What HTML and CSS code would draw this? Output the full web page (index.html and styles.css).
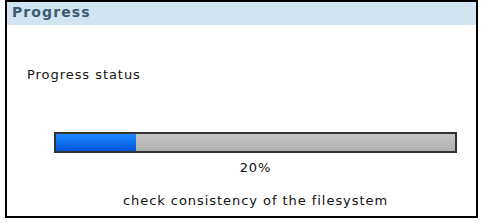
FILE: index.html
```html
<!DOCTYPE html>
<html lang="en">

<head>
    <meta charset="UTF-8" />
    <title>Progress</title>
    <link rel="stylesheet" href="styles.css">
</head>

<body>

    <div class="panel">
        <div class="panel-header">Progress</div>
        <div class="panel-body">
            <p class="status-label">Progress status</p>
            <div class="progress-bar">
                <div class="progress-fill" style="width: 20%"></div>
            </div>
            <div class="progress-value">20%</div>
            <div class="progress-task">check consistency of the filesystem</div>
        </div>
    </div>

</body>

</html>
```

FILE: styles.css
```css
* {
    box-sizing: border-box;
}

body {
    margin: 0;
    background: #fff;
    font-family: "DejaVu Sans", Verdana, sans-serif;
    font-size: 13px;
    letter-spacing: 0.95px;
    line-height: 16px;
    color: #111;
}

.panel {
    margin-left: 5px;
    width: 473px;
    height: 218px;
    border: 2px solid #000;
    display: flex;
    flex-direction: column;
}

.panel-header {
    background: #d3e4f1;
    color: #3b5a74;
    font-weight: bold;
    font-size: 14px;
    letter-spacing: 1.1px;
    height: 23px;
    line-height: 21px;
    padding-left: 5px;
}

.panel-body {
    flex: 1;
    display: flex;
    flex-direction: column;
    align-items: center;
    padding-left: 28px;
}

.status-label {
    align-self: flex-start;
    margin: 42px 0 0 -8px;
}

.progress-bar {
    margin-top: 49px;
    width: 403px;
    height: 21px;
    border: 2px solid #333;
    background: linear-gradient(#c4c4c4, #b0b0b0);
}

.progress-fill {
    height: 100%;
    background: linear-gradient(#1e88ff, #0056d8);
}

.progress-value {
    margin-top: 7px;
}

.progress-task {
    margin-top: 17px;
}
```
